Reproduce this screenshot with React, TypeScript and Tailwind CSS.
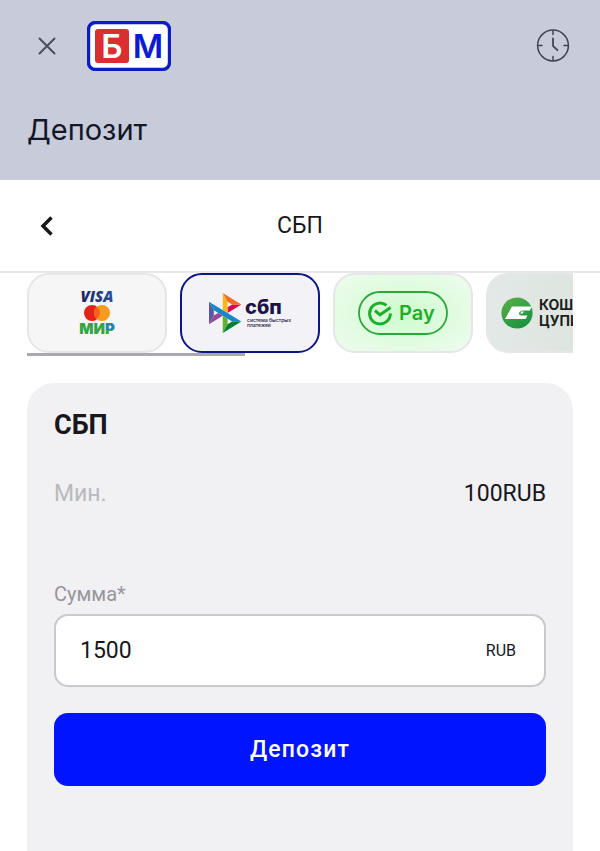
import { useState } from "react";

const BrandLogo = () => (
  <svg width="84" height="50" viewBox="0 0 84 50" role="img" aria-label="БМ">
    <rect x="1.5" y="1.5" width="81" height="47" rx="7" fill="#fff" stroke="#0a1cc4" strokeWidth="3.4" />
    <rect x="8" y="8" width="34" height="34" rx="3" fill="#dc2d30" />
    <text x="25" y="37" textAnchor="middle" fontFamily="Inter, sans-serif" fontWeight="600" fontSize="33" fill="#fff">
      Б
    </text>
    <text x="61" y="37" textAnchor="middle" fontFamily="Inter, sans-serif" fontWeight="600" fontSize="33" fill="#0a1cd2">
      М
    </text>
  </svg>
);

const CardsLogo = () => (
  <svg width="48" height="50" viewBox="0 0 48 50" role="img" aria-label="Visa, Mastercard, Мир">
    <defs>
      <linearGradient id="visa" x1="0" x2="1">
        <stop offset="0" stopColor="#1d2560" />
        <stop offset="1" stopColor="#27509b" />
      </linearGradient>
      <linearGradient id="mir" gradientUnits="userSpaceOnUse" x1="0" y1="37" x2="0" y2="47">
        <stop offset="0.4" stopColor="#1b86c0" />
        <stop offset="0.5" stopColor="#35a447" />
      </linearGradient>
    </defs>
    <text x="24" y="14" textAnchor="middle" fontFamily="'Open Sans', sans-serif" fontWeight="800" fontStyle="italic" fontSize="15" fill="url(#visa)">
      VISA
    </text>
    <circle cx="19" cy="25" r="8" fill="#e2231a" />
    <circle cx="29" cy="25" r="8" fill="#f79a1f" />
    <path d="M24 18.8a8 8 0 0 1 0 12.4a8 8 0 0 1 0-12.4z" fill="#f4611f" />
    <text x="24" y="46" textAnchor="middle" fontFamily="Inter, sans-serif" fontWeight="900" fontSize="15" fill="#35a447">
      МИ<tspan fill="url(#mir)">Р</tspan>
    </text>
  </svg>
);

const SbpLogo = () => (
  <svg width="84" height="42" viewBox="0 0 84 42" role="img" aria-label="Система быстрых платежей">
    <g transform="translate(1 1) scale(0.333)">
      <path d="M0 26.12l14.532 25.975v15.844L.017 93.863z" fill="#5b57a2" />
      <path d="M55.797 42.643l13.617-8.346 27.868-.026-41.485 25.414z" fill="#d90751" />
      <path d="M55.72 25.967l.077 34.39-14.566-8.95V0z" fill="#fab718" />
      <path d="M97.282 34.271l-27.869.026-13.693-8.33L41.231 0z" fill="#ed6f26" />
      <path d="M55.797 94.007V77.322l-14.566-8.78.008 51.458z" fill="#63b22f" />
      <path d="M69.38 85.737L14.531 52.095 0 26.12l97.223 59.583z" fill="#1487c9" />
      <path d="M41.24 120l14.556-25.993 13.583-8.27 27.843-.034z" fill="#017f36" />
      <path d="M.017 93.863l41.333-25.32-13.896-8.526-12.922 7.922z" fill="#984995" />
    </g>
    <text x="37" y="22" fontFamily="Inter, sans-serif" fontWeight="800" fontSize="20" fill="#1d1346">
      сбп
    </text>
    <text fontFamily="Inter, sans-serif" fontWeight="500" fontSize="5" fill="#1d1346">
      <tspan x="39" y="30">система быстрых</tspan>
      <tspan x="39" y="35">платежей</tspan>
    </text>
  </svg>
);

const SberPayLogo = () => (
  <svg width="90" height="44" viewBox="0 0 90 44" role="img" aria-label="SberPay">
    <rect x="1" y="1" width="88" height="42" rx="21" fill="none" stroke="#2fa63c" strokeWidth="1.8" />
    <path d="M28.5 14.4A10.4 10.4 0 1 0 32.4 22.5" fill="none" stroke="#1fae2a" strokeWidth="3" />
    <path d="M17 19.5l5 4.3L32.6 16.5" fill="none" stroke="#1fae2a" strokeWidth="3" />
    <text x="41" y="29" fontFamily="Inter, sans-serif" fontWeight="600" fontSize="20" fill="#1fae2a">
      Pay
    </text>
  </svg>
);

const WalletLogo = () => (
  <span className="flex items-center gap-1.5">
    <svg width="32" height="32" viewBox="0 0 32 32" className="shrink-0" aria-hidden="true">
      <defs>
        <linearGradient id="wallet" x1="0" y1="0" x2="0.6" y2="1">
          <stop offset="0" stopColor="#5cb048" />
          <stop offset="1" stopColor="#1c9440" />
        </linearGradient>
      </defs>
      <circle cx="16" cy="16" r="15.6" fill="url(#wallet)" />
      <path d="M11 9.500h20l-2.200 4h-6.600c-2.500 0-4.200 1.500-4.200 3 0 1.300 1 2 2.500 2h6l-2 3.500H4z" fill="#fff" />
      <path d="M20.200 14.600h2.600l-1 2h-2.400z" fill="#fff" />
    </svg>
    <span className="text-left font-['Inter',sans-serif] text-sm leading-4 font-bold whitespace-nowrap text-[#1c1f20]">
      КОШЕЛЕК
      <br />
      ЦУПИС
    </span>
  </span>
);

const methods = [
  { id: "cards", logo: <CardsLogo />, style: "justify-center bg-[#f6f6f7]" },
  { id: "sbp", logo: <SbpLogo />, style: "justify-center bg-[#f3f3f7]" },
  { id: "sberpay", logo: <SberPayLogo />, style: "justify-center bg-radial from-[#cdfccd] to-[#f0fbf0]" },
  { id: "wallet", logo: <WalletLogo />, style: "justify-start pl-[13px] bg-linear-to-r from-[#e3e9e6] to-[#dbe3de]" },
];

function App() {
  const [method, setMethod] = useState("sbp");
  const [amount, setAmount] = useState("1500");

  return (
    <div className="flex min-h-screen flex-col bg-white font-['Roboto',sans-serif] text-[#17171c]">
      {/* Top bar */}
      <header className="bg-[#c8cbd9] px-[27px] pt-[21px] pb-8">
        <div className="flex items-center">
          <button type="button" aria-label="Закрыть" className="px-2.5 py-2">
            <svg width="20" height="20" viewBox="0 0 20 20" fill="none" stroke="#4a4f5c" strokeWidth="2" strokeLinecap="round">
              <path d="M2.5 2.5l15 15M17.5 2.5l-15 15" />
            </svg>
          </button>
          <a href="#" className="ml-5">
            <BrandLogo />
          </a>
          <button type="button" aria-label="История" className="ml-auto">
            <svg width="40" height="36" viewBox="0 0 40 36" fill="none" stroke="#3f4453" strokeWidth="1.5" strokeLinecap="round">
              <circle cx="20" cy="17.5" r="15.4" />
              <path d="M20 2.5v4M20 28.5v4M5 17.5h4M31 17.5h4" />
              <path d="M20 10.5v7.3l4.4 4.4" strokeWidth="1.8" />
            </svg>
          </button>
        </div>
        <h1 className="mt-[41px] font-['Inter',sans-serif] text-[29px] leading-9 text-[#111827]">Депозит</h1>
      </header>

      {/* Current method */}
      <div className="grid h-[93px] grid-cols-[40px_1fr_40px] items-center border-b-2 border-[#e8e8eb] px-[27px]">
        <button type="button" aria-label="Назад" className="flex h-9 items-center pl-3">
          <svg width="14" height="20" viewBox="0 0 14 20" fill="none" stroke="#17171c" strokeWidth="3.5">
            <path d="M12.5 1.5L4 10l8.5 8.5" />
          </svg>
        </button>
        <h2 className="text-center text-[23px] leading-8">СБП</h2>
      </div>

      <main className="flex flex-1 flex-col px-[27px]">
        <div className="overflow-hidden">
          <div className="flex gap-[13px]">
            {methods.map((m) => (
              <button
                key={m.id}
                type="button"
                aria-pressed={method === m.id}
                onClick={() => setMethod(m.id)}
                className={`flex h-20 w-[140px] shrink-0 items-center rounded-[22px] border-2 ${m.style} ${
                  method === m.id ? "border-[#0c1784]" : "border-[#e6e6e9]"
                }`}
              >
                {m.logo}
              </button>
            ))}
          </div>
          {/* Scroll thumb */}
          <div className="h-[3px] w-2/5 bg-[#a9a9ad]" />
        </div>

        <form
          onSubmit={(e) => e.preventDefault()}
          className="mt-[27px] flex flex-1 flex-col rounded-t-[27px] bg-[#f1f0f3] px-[27px] pt-[26px]"
        >
          <h3 className="text-[27px] leading-8 font-bold">СБП</h3>

          <div className="mt-[37px] flex justify-between text-[23px] leading-8">
            <span className="text-[#b9b9bd]">Мин.</span>
            <span>100RUB</span>
          </div>

          <label htmlFor="amount" className="mt-[72px] text-xl leading-6 text-[#96969b]">
            Сумма*
          </label>
          <div className="mt-2 flex h-[73px] items-center rounded-[14px] border-2 border-[#c9c9cd] bg-white px-6">
            <input
              id="amount"
              type="text"
              inputMode="numeric"
              value={amount}
              onChange={(e) => setAmount(e.target.value)}
              className="min-w-0 flex-1 text-[23px] leading-8 outline-none"
            />
            <span className="px-1 text-base">RUB</span>
          </div>

          <button
            type="submit"
            className="mt-[26px] h-[73px] rounded-[14px] bg-[#0014ff] text-[23px] leading-8 font-medium tracking-wider text-white"
          >
            Депозит
          </button>
        </form>
      </main>
    </div>
  );
}

export default App;
